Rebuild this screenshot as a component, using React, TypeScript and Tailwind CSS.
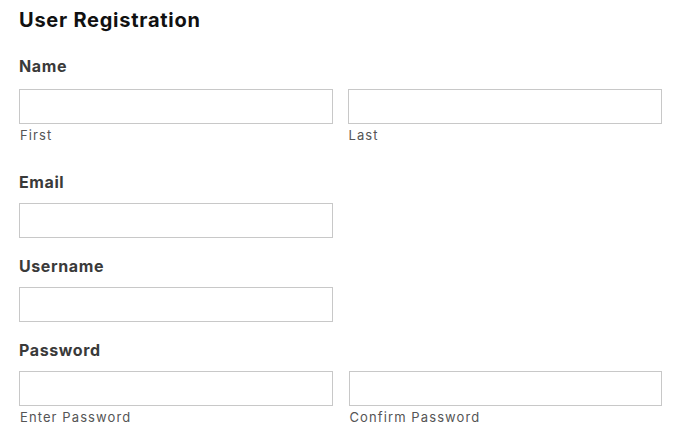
export default function App() {
  const inputClass =
    'block h-[35px] border border-[#c8c8c8] bg-white outline-none px-2';
  const labelClass =
    'block text-[16px] font-bold text-[#3a3a3a] leading-[20px] tracking-[0.6px]';
  const hintClass =
    'block mt-[3px] text-[13px] text-[#555] tracking-[1.1px] leading-[16px] pl-[1px]';

  return (
    <div className="min-h-screen bg-white px-[19px] pt-[8px] font-['Inter',sans-serif]">
      <h1 className="text-[20px] font-bold text-[#111] leading-[24px] tracking-[0.75px]">
        User Registration
      </h1>

      <form className="w-[643px]">
        <div className="mt-[24px]">
          <label className={labelClass}>Name</label>
          <div className="mt-[13px] grid grid-cols-2 gap-x-[16px]">
            <div>
              <input type="text" className={`${inputClass} w-full`} />
              <span className={hintClass}>First</span>
            </div>
            <div className="-ml-[1px]">
              <input type="text" className={`${inputClass} w-full`} />
              <span className={hintClass}>Last</span>
            </div>
          </div>
        </div>

        <div className="mt-[29px]">
          <label className={labelClass}>Email</label>
          <input type="email" className={`${inputClass} mt-[11px] w-[314px]`} />
        </div>

        <div className="mt-[18px]">
          <label className={labelClass}>Username</label>
          <input type="text" className={`${inputClass} mt-[11px] w-[314px]`} />
        </div>

        <div className="mt-[18px]">
          <label className={labelClass}>Password</label>
          <div className="mt-[11px] grid grid-cols-2 gap-x-[16px]">
            <div>
              <input type="password" className={`${inputClass} w-full`} />
              <span className={hintClass}>Enter Password</span>
            </div>
            <div>
              <input type="password" className={`${inputClass} w-full`} />
              <span className={hintClass}>Confirm Password</span>
            </div>
          </div>
        </div>
      </form>
    </div>
  );
}
